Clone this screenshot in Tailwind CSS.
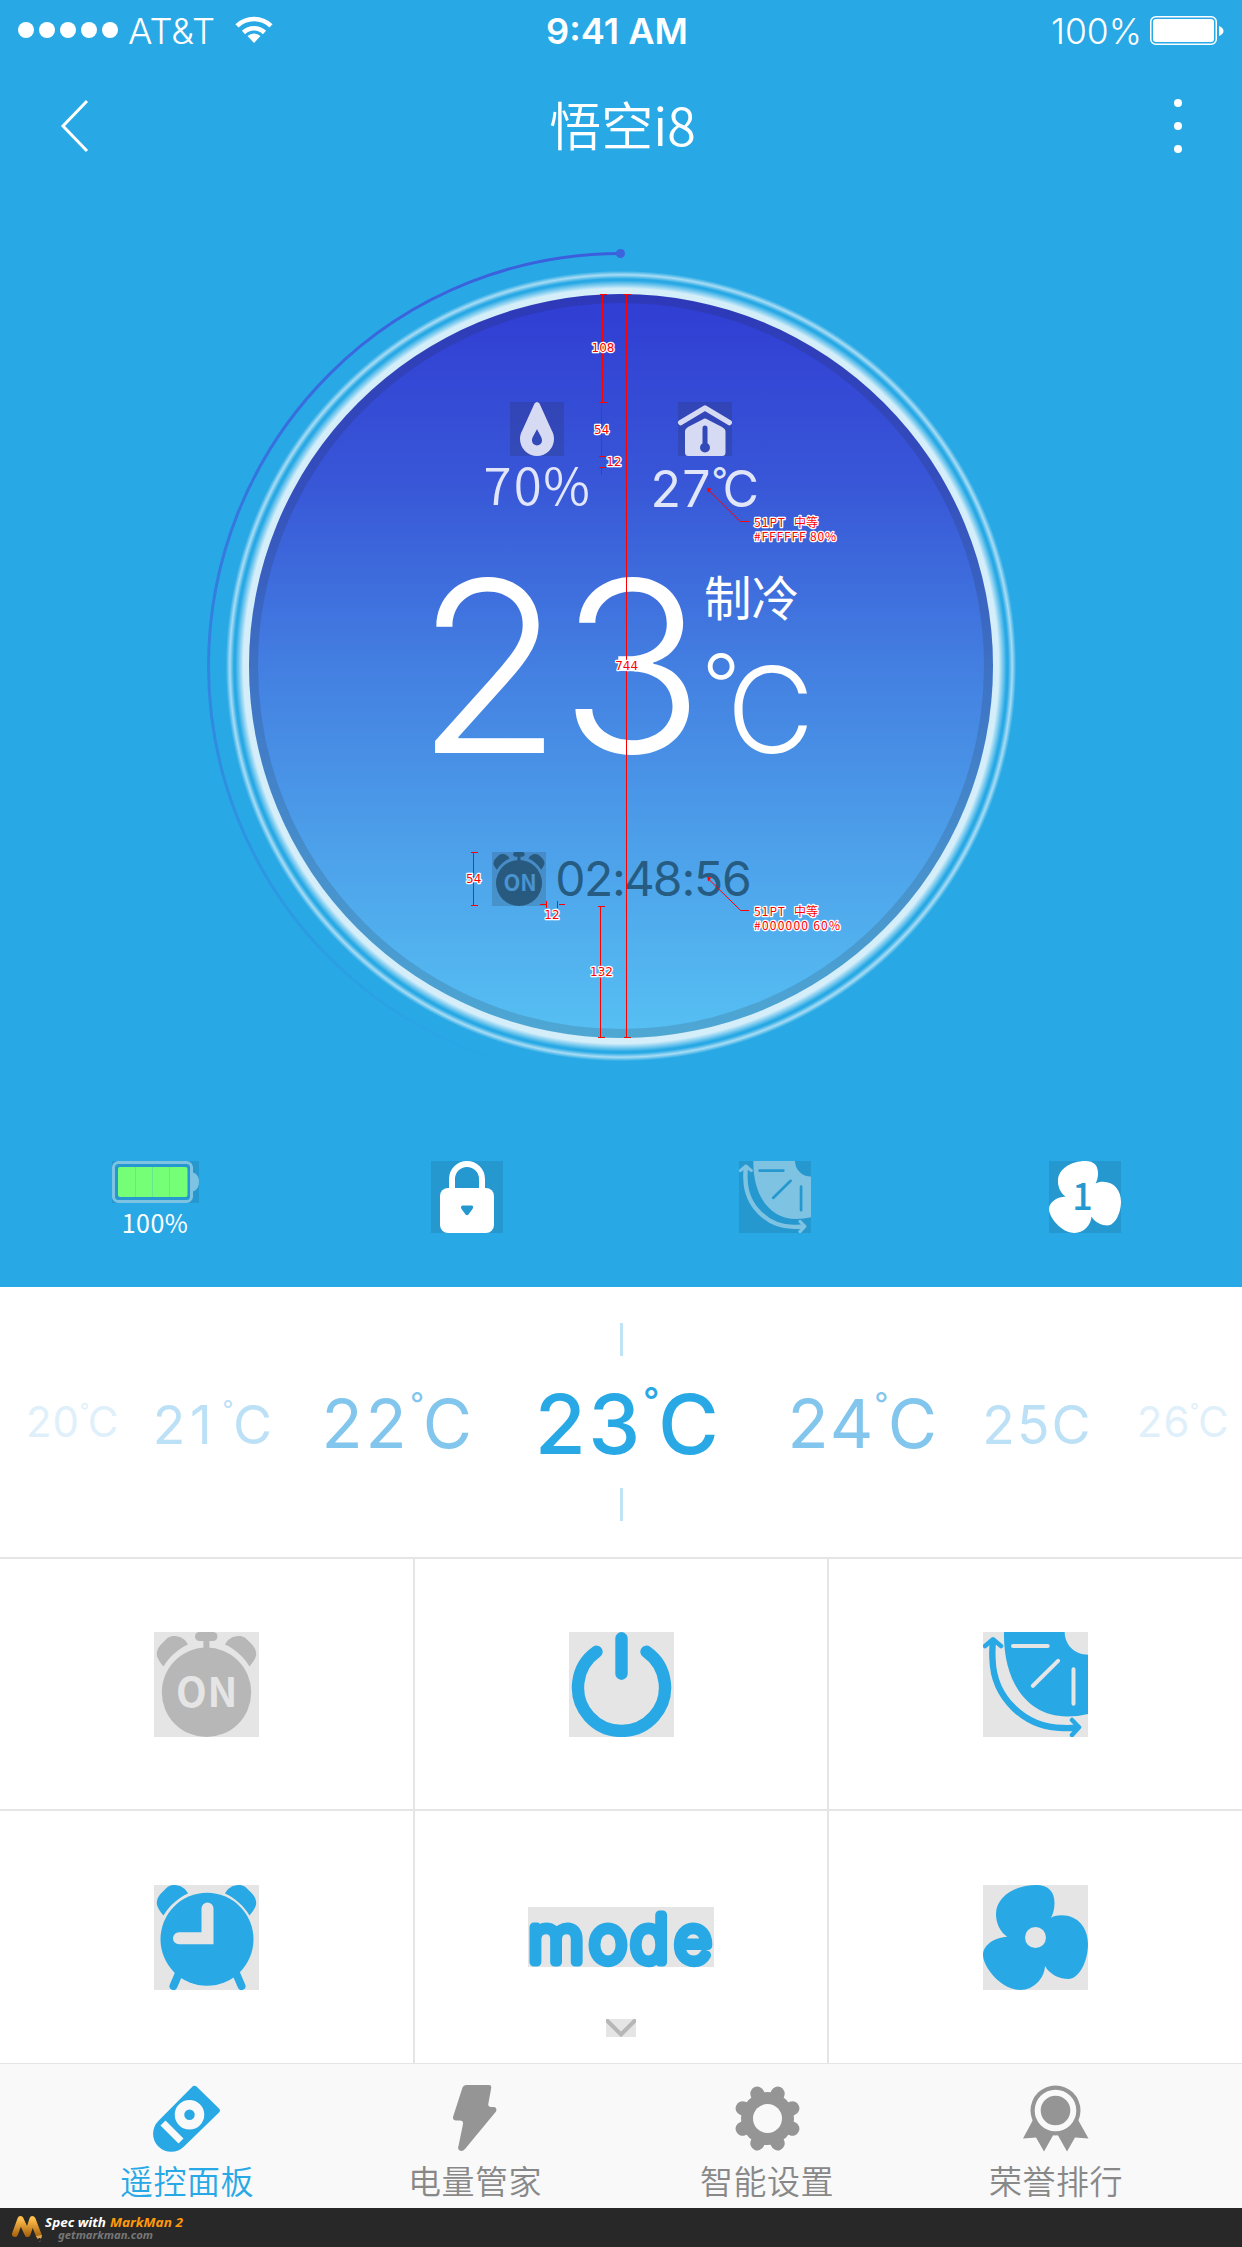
<!DOCTYPE html>
<html lang="zh-CN">
<head>
<meta charset="utf-8">
<title>悟空i8</title>
<script src="https://cdn.jsdelivr.net/npm/@tailwindcss/browser@4"></script>
</head>
<body class="w-[1242px] bg-white font-['Inter','Noto_Sans_CJK_SC',sans-serif]">

<!-- shared icons -->
<svg class="hidden">
  <symbol id="bells" viewBox="0 0 105 105">
    <path d="M9.5 34.5C4.500 29 2.800 24 2.800 22.500C3 16 6 13.500 9.500 10C13.500 5.500 16 4 20.500 4C26.500 4 31.500 7.500 34 12.500C24 17 15 25 9.500 34.500Z"/>
    <path d="M95.500 34.500C100.500 29 102.200 24 102.200 22.500C102 16 99 13.500 95.500 10C91.500 5.500 89 4 84.500 4C78.500 4 73.500 7.500 71 12.500C81 17 90 25 95.500 34.500Z"/>
  </symbol>
  <symbol id="timer" viewBox="0 0 105 105">
    <use href="#bells" width="105" height="105"/>
    <rect x="41" y="0" width="22.500" height="9" rx="4.500"/>
    <rect x="49.400" y="6" width="6" height="12"/>
    <circle cx="52.500" cy="60.300" r="44.700"/>
  </symbol>
  <symbol id="swing" viewBox="0 0 105 105">
    <path fill="currentColor" fill-rule="evenodd" d="M21 0C20 48 43 84.500 84 84.500Q95 84.500 105 82V22.700C92 22.700 81.700 13 81.700 0ZM30 12H64.700A2 2 0 0 1 64.700 16H30A2 2 0 0 1 30 12ZM48.300 52.600L73.900 27.300A2 2 0 0 1 76.700 30.100L51.100 55.400A2 2 0 0 1 48.300 52.600ZM88.500 37.300A2 2 0 0 1 92.500 37.300V71.800A2 2 0 0 1 88.500 71.800Z"/>
    <path fill="none" stroke="currentColor" stroke-width="6.400" d="M10 9Q9 18 9.500 27C10.500 66 42 96 80 96Q87 96.300 95 95.500"/>
    <path fill="none" stroke="currentColor" stroke-width="4.500" stroke-linecap="round" stroke-linejoin="round" d="M2 14L10 7.300L18 14M89 88L96 95.300L89 103"/>
  </symbol>
  <symbol id="fan" viewBox="0 0 105 105">
    <path d="M68 32.700C70 29 71.500 24 71.500 18C71.500 7 66 0 53 0C32 0 13 12 13 29C13 38 17 47 24.300 51.700C10 52.500 0 61 0 70C0 82 18 105 37.500 105C51 105 61.500 93 62 81C67 90 77 94 85.500 94C95 94 105 78 105 59C105 43 95 30.300 78.500 30.300C74.500 30.300 71 31 68 32.700Z"/>
  </symbol>
</svg>

<section class="flex h-[1287px] flex-col bg-[#28a9e5] text-white">
  <!-- status bar -->
  <div class="grid h-[60px] grid-cols-3 items-center text-[35px] leading-none">
    <svg class="h-[60px] w-[300px]" viewBox="0 0 300 60" fill="#fff">
      <circle cx="26" cy="30" r="8"/><circle cx="47" cy="30" r="8"/><circle cx="68" cy="30" r="8"/><circle cx="89" cy="30" r="8"/><circle cx="110" cy="30" r="8"/>
      <text x="128" y="44" font-size="35" font-weight="350" textLength="87" lengthAdjust="spacingAndGlyphs">AT&amp;T</text>
      <path d="M254 43L247.500 36A9.500 9.500 0 0 1 260.500 36Z"/>
      <path fill="none" stroke="#fff" stroke-width="4.600" d="M243.500 32.500A15 15 0 0 1 264.500 32.500M237 25.800A24.500 24.500 0 0 1 271 25.800"/>
    </svg>
    <svg class="h-[60px] w-[414px]" viewBox="0 0 414 60" fill="#fff"><text x="132" y="44" font-size="35" font-weight="600" textLength="142" lengthAdjust="spacingAndGlyphs">9:41 AM</text></svg>
    <svg class="h-[60px] w-[414px]" viewBox="0 0 414 60" fill="#fff">
      <text x="223" y="44" font-size="35" font-weight="350" textLength="91" lengthAdjust="spacingAndGlyphs">100%</text>
      <rect x="322.750" y="16.750" width="65.500" height="27.500" rx="5" fill="none" stroke="#fff" stroke-width="1.500"/>
      <rect x="325" y="19" width="61" height="23" rx="3"/>
      <path d="M391 26Q395.500 28 395.500 31Q395.500 34 391 36Z"/>
    </svg>
  </div>
  <!-- title bar -->
  <header class="grid h-[132px] grid-cols-[1fr_auto_1fr] items-center">
    <svg class="ml-[60px] h-[54px] w-[30px]" viewBox="0 0 30 54" fill="none" stroke="#fff" stroke-width="3"><path d="M27 2L3 27L27 52"/></svg>
    <h1 class="pb-[5px] pl-[3px] font-['Noto_Sans_CJK_SC',sans-serif] text-[52px] leading-none font-[350]">悟空i8</h1>
    <svg class="mr-[58px] h-[54px] w-3 justify-self-end" viewBox="0 0 12 54" fill="#fff"><circle cx="6" cy="4" r="4"/><circle cx="6" cy="27" r="4"/><circle cx="6" cy="50" r="4"/></svg>
  </header>

  <!-- dial -->
  <svg class="h-[928px] w-[1242px]" viewBox="0 192 1242 928">
    <defs>
      <linearGradient id="face" x1="0" y1="0" x2="0" y2="1"><stop offset="0" stop-color="#303dd3"/><stop offset="0.250" stop-color="#3856d7"/><stop offset="0.500" stop-color="#437fe1"/><stop offset="0.750" stop-color="#4da1ea"/><stop offset="1" stop-color="#56c0f3"/></linearGradient>
      <linearGradient id="arc" gradientUnits="userSpaceOnUse" x1="0" y1="253" x2="0" y2="1078"><stop offset="0" stop-color="#3b5fdc"/><stop offset="1" stop-color="#3b5fdc" stop-opacity="0"/></linearGradient>
      <radialGradient id="halo" gradientUnits="userSpaceOnUse" cx="621" cy="666" r="400">
        <stop offset="0.944" stop-color="#fff" stop-opacity="0.800"/><stop offset="0.964" stop-color="#fff" stop-opacity="0"/>
        <stop offset="0.968" stop-color="#fff" stop-opacity="0"/><stop offset="0.978" stop-color="#fff" stop-opacity="0.600"/><stop offset="0.988" stop-color="#fff" stop-opacity="0"/>
      </radialGradient>
    </defs>
    <path d="M621 253.500A412.500 412.500 0 0 0 621 1078.500" fill="none" stroke="url(#arc)" stroke-width="3"/>
    <circle cx="620.500" cy="253.500" r="4.500" fill="#3b64dd"/>
    <circle cx="621" cy="666" r="400" fill="url(#halo)"/>
    <circle cx="621" cy="666" r="372" fill="url(#face)"/>
    <circle cx="621" cy="666" r="367.500" fill="none" stroke="#222" stroke-opacity="0.150" stroke-width="9"/>

    <g fill="#222" fill-opacity="0.170"><rect x="510" y="402" width="54" height="54"/><rect x="678" y="402" width="54" height="54"/><rect x="492" y="852" width="54" height="54"/></g>
    <path transform="translate(510 402)" fill="#d7daf3" fill-rule="evenodd" d="M29.500 1.500L41.500 28C43.300 31 44 34 44 37A17 17 0 0 1 10 37C10 34 10.700 31 12.500 28L24.500 1.500Q27 -1.500 29.500 1.500ZM27 27C25 32 22 34.500 22 38.500A5 5 0 0 0 32 38.500C32 34.500 29 32 27 27Z"/>
    <g transform="translate(678 402)" fill="#d7daf3">
      <path fill="none" stroke="#d7daf3" stroke-width="5.500" stroke-linecap="round" stroke-linejoin="round" d="M2.800 20.500L27 6L51.200 20.500"/>
      <path fill-rule="evenodd" d="M10 25L25 17.200Q27 16 29 17.200L44 25Q47.500 26.800 47.500 29V50.500Q47.500 54 44 54H10.500Q7 54 7 50.500V29Q7 26.800 10 25ZM24.500 26V41.200A5 5 0 1 0 29.500 41.200V26A2.500 2.500 0 0 0 24.500 26Z"/>
    </g>
    <g text-anchor="middle" fill="#fff">
      <text y="505" x="497.500 527.700 566.500" font-family="Noto Sans CJK SC" font-weight="350" font-size="51" fill-opacity="0.850">70%</text>
      <text y="506.500" x="665.700 696.300" font-size="50" font-weight="400" fill-opacity="0.850">27<tspan x="719.700" y="493" font-size="36">°</tspan><tspan x="740.700" y="506.500">C</tspan></text>
      <text y="752.500" x="489 632" font-size="239" font-weight="300">23</text>
      <text y="715" x="721" font-size="84" font-weight="300">°</text>
      <text y="753.300" x="770.500" font-size="120" font-weight="300">C</text>
      <text y="616" x="751.500" font-family="Noto Sans CJK SC" font-size="47.500">制冷</text>
      <text y="896" x="570.300 598.700 619 639.300 667.700 688.300 708.700 737" font-size="48" font-weight="400" fill="#275c82">02:48:56</text>
    </g>
    <g fill="#285a7f"><use href="#timer" x="492" y="852" width="54" height="54"/></g>
    <text x="512 528.500" y="891" text-anchor="middle" font-family="Noto Sans CJK SC" font-weight="700" font-size="22" fill="#4893d0">ON</text>

    <!-- spec marks -->
    <g fill="none" stroke="#f00" shape-rendering="crispEdges">
      <path d="M599.500 294.500H606.500M602.500 294V402M598.500 402.500H606.500M601.500 402V456M598.500 456.500H605.500M598.500 467.500H605.500M601.500 467V475M623.500 294.500H630.500M626.500 294V1037M623.500 1037.500H630.500M597.500 906.500H604.500M600.500 906V1037M597.500 1037.500H604.500M470.500 852.500H477.500M473.500 852V905M470.500 905.500H477.500M540 904.500H546M546.500 901V908M557.500 901V908M559 904.500H565"/>
    </g>
    <g fill="none" stroke="#f00"><path d="M709 490.500L740.300 521.500H749M709 879.500L740.700 910.500H749"/><path fill="#f00" stroke="none" d="M707 488L711.500 488.500L708 492.500ZM707.300 877L711.500 877.500L708 881.500Z"/></g>
    <g fill="#f00" stroke="#fff" stroke-width="2.500" stroke-linejoin="round" paint-order="stroke" font-size="12" font-family="DejaVu Sans">
      <g text-anchor="middle"><text x="603" y="352">108</text><text x="601.700" y="433.500">54</text><text x="614" y="466">12</text><text x="626.700" y="670">744</text><text x="473.700" y="883">54</text><text x="552" y="919">12</text><text x="601.500" y="976">132</text></g>
      <g font-family="Noto Sans CJK SC"><text x="754" y="527" textLength="31">51PT</text><text x="794" y="527">中等</text><text x="754" y="541" textLength="82">#FFFFFF 80%</text><text x="754" y="916" textLength="31">51PT</text><text x="794" y="916">中等</text><text x="754" y="930" textLength="86">#000000 60%</text></g>
    </g>
  </svg>

  <!-- state icons -->
  <div class="flex pt-[41px] pl-[112px]">
    <div class="w-[87px]">
      <svg class="block h-[42px] w-[87px]" viewBox="0 0 87 42"><rect width="87" height="42" fill="#2598cf"/><rect x="1.500" y="1.500" width="78" height="39" rx="5" fill="none" stroke="#7fc3e3" stroke-width="3"/><path d="M81 11.500Q87 13.500 87 21Q87 28.500 81 30.500Z" fill="#7fc3e3"/><rect x="6" y="6" width="69.500" height="30" rx="2" fill="#75ff76"/><path d="M23.500 6V36M40.500 6V36M57.500 6V36" stroke="#62ea8a"/></svg>
      <div class="pt-[7px] pr-[1px] text-center font-['Noto_Sans_CJK_SC',sans-serif] text-[25px] leading-6 tracking-[0.5px]">100%</div>
    </div>
    <svg class="ml-[232px] size-[72px]" viewBox="0 0 72 72"><rect width="72" height="72" fill="#2598cf"/><path d="M21 30V18A15 15 0 0 1 51 18V30" fill="none" stroke="#fff" stroke-width="6"/><rect x="9" y="27" width="54" height="45" rx="8" fill="#fff"/><path d="M31.500 44.500H41Q43 45.500 41.500 48L37.500 53.500Q36 55 34.500 53.500L30.500 48Q29 45.500 31.500 44.500Z" fill="#2598cf"/></svg>
    <svg class="ml-[236px] size-[72px] text-[#7fc3e3]" viewBox="0 0 72 72"><rect width="72" height="72" fill="#2598cf"/><use href="#swing" width="72" height="72"/></svg>
    <svg class="ml-[238px] size-[72px]" viewBox="0 0 72 72"><rect width="72" height="72" fill="#2598cf"/><use href="#fan" width="72" height="72" fill="#fff"/><text x="33.500" y="49" text-anchor="middle" font-family="Noto Sans CJK SC" font-weight="500" font-size="36" fill="#2598cf">1</text></svg>
  </div>
</section>

<!-- temperature picker -->
<section class="flex h-[270px] flex-col items-center justify-center">
  <div class="h-[33px] w-[3px] bg-[#bfe4f6]"></div>
  <svg class="h-[132px] w-[1242px]" viewBox="0 1356 1242 132" text-anchor="middle">
    <g font-size="42" font-weight="400" fill="#dff0fb"><text y="1437" x="38.800 65.700">20<tspan font-size="20" x="84.500" y="1417.500">°</tspan><tspan x="103.200" y="1437">C</tspan></text><text y="1437" x="1149.500 1176.500">26<tspan font-size="20" x="1194.500" y="1417.500">°</tspan><tspan x="1213.300" y="1437">C</tspan></text></g>
    <g font-size="53.500" font-weight="400" fill="#bce0f6"><text y="1444" x="169 201">21<tspan font-size="24" x="228" y="1418">°</tspan><tspan x="252.500" y="1444">C</tspan></text><text y="1444" x="998.500 1033.300 1071">25C</text></g>
    <g font-size="67.500" font-weight="400" fill="#82c6ed"><text y="1448" x="342 386">22<tspan font-size="31" x="417" y="1415">°</tspan><tspan x="447.500" y="1448">C</tspan></text><text y="1448" x="808 851.500">24<tspan font-size="31" x="881.300" y="1415">°</tspan><tspan x="912.300" y="1448">C</tspan></text></g>
    <text font-size="83" font-weight="500" fill="#28a9e5" y="1454" x="560.300 614.300">23<tspan font-size="36" x="651.300" y="1413">°</tspan><tspan x="688.500" y="1454">C</tspan></text>
  </svg>
  <div class="h-[33px] w-[3px] bg-[#bfe4f6]"></div>
</section>

<!-- control pad -->
<section class="grid h-[507px] grid-cols-[413px_412px_413px] grid-rows-[250px_252px] gap-[2px] border-t-2 border-b border-[#e5e5e5] bg-[#e5e5e5]">
  <div class="flex items-center justify-center bg-white"><svg class="size-[105px]" viewBox="0 0 105 105"><rect width="105" height="105" fill="#e5e5e5"/><use href="#timer" width="105" height="105" fill="#b7b7b7"/><text x="37.500 68.500" y="75" text-anchor="middle" font-family="Noto Sans CJK SC" font-weight="700" font-size="40" fill="#e5e5e5">ON</text></svg></div>
  <div class="flex items-center justify-center bg-white"><svg class="size-[105px]" viewBox="0 0 105 105"><rect width="105" height="105" fill="#e5e5e5"/><path d="M27.500 19.800A43.500 43.500 0 1 0 77.500 19.800M52.500 6.300V41.700" fill="none" stroke="#28a9e5" stroke-width="12.400" stroke-linecap="round"/></svg></div>
  <div class="flex items-center justify-center bg-white"><svg class="size-[105px] text-[#28a9e5]" viewBox="0 0 105 105"><rect width="105" height="105" fill="#e5e5e5"/><use href="#swing" width="105" height="105"/></svg></div>
  <div class="flex items-center justify-center bg-white"><svg class="size-[105px]" viewBox="0 0 105 105"><rect width="105" height="105" fill="#e5e5e5"/><use href="#bells" y="-4" width="105" height="105" fill="#28a9e5"/><path d="M25.500 87L19.500 101M81.500 87L87.500 101" stroke="#28a9e5" stroke-width="8" stroke-linecap="round"/><circle cx="53" cy="54.300" r="46.500" fill="#28a9e5"/><path d="M53.500 23.500V53.300H25" fill="none" stroke="#e5e5e5" stroke-width="12" stroke-linecap="round"/></svg></div>
  <div class="flex flex-col items-center bg-white pt-[96px]">
    <svg class="h-[60px] w-[186px] overflow-visible" viewBox="0 0 186 60"><rect width="186" height="60" fill="#e5e5e5"/><text x="28 80 121.500 165" y="55" text-anchor="middle" font-size="64" font-weight="200" fill="#28a9e5" stroke="#28a9e5" stroke-width="9" stroke-linejoin="round" stroke-linecap="round">mode</text></svg>
    <svg class="mt-[52px] h-[18px] w-[30px]" viewBox="0 0 30 18"><rect width="30" height="18" fill="#e5e5e5"/><path d="M1.500 2L15 15.500L28.500 2" fill="none" stroke="#b7b7b7" stroke-width="4" stroke-linecap="round"/></svg>
  </div>
  <div class="flex items-center justify-center bg-white"><svg class="size-[105px]" viewBox="0 0 105 105"><rect width="105" height="105" fill="#e5e5e5"/><use href="#fan" width="105" height="105" fill="#28a9e5"/><circle cx="52.500" cy="52.500" r="10.500" fill="#e5e5e5"/></svg></div>
</section>

<!-- tab bar -->
<nav class="grid h-[144px] grid-cols-[290px_286px_298px_280px] bg-[#f9f9f9] px-[42px] pt-[21px] text-center font-['Noto_Sans_CJK_SC',sans-serif] text-[33px] leading-[44px] font-[350] tracking-[0.5px] text-[#888]">
  <div class="flex flex-col items-center text-[#28a9e5]">
    <svg class="h-[67px] w-[68px]" viewBox="0 0 68 67"><path fill="#28a9e5" d="M39.500 1.500Q41.500 0 43.500 1.500L66 23.500Q68 25.500 66 27.500L31 61.500A18 18 0 0 1 5.300 36Z"/><circle cx="36.500" cy="29.700" r="10" fill="#28a9e5" stroke="#f9f9f9" stroke-width="9.500"/><path d="M10 38L28 56" stroke="#f9f9f9" stroke-width="7"/></svg>
    <span class="pt-[6px]">遥控面板</span>
  </div>
  <div class="flex flex-col items-center">
    <svg class="h-[67px] w-[44px]" viewBox="0 0 44 67"><path fill="#959595" d="M13 0H36Q38.500 0 38.300 2.500L35.300 19Q35 22 38 22H41Q44.500 22.500 43 26.500L12 64Q9 67.500 6 65Q4.500 63.500 5.500 61L10 39Q10.500 35.500 7 35.500H2.500Q-.5 35 0 32L9.500 2.500Q10.500 0 13 0Z"/></svg>
    <span class="pt-[6px]">电量管家</span>
  </div>
  <div class="flex flex-col items-center">
    <svg class="size-[67px]" viewBox="-33.500 -33.500 67 67"><g stroke="#959595" stroke-width="14" stroke-linecap="round"><path d="M-10.200 -24.900L10.200 24.900M10.200 -24.900L-10.200 24.900M-24.900 -10.200L24.900 10.200M-24.900 10.200L24.900 -10.200"/></g><circle r="26.500" fill="#959595"/><circle r="14.500" fill="#f9f9f9"/></svg>
    <span class="pt-[6px]">智能设置</span>
  </div>
  <div class="flex flex-col items-center">
    <svg class="h-[67px] w-[66px]" viewBox="0 0 66 67"><path fill="#959595" d="M11 33L0 53.500L13 52.500L21 66.500L32.500 46L44 66.500L52 52.500L65.500 53.500L54 33Z"/><circle cx="32.500" cy="25.500" r="25" fill="#959595"/><circle cx="32.500" cy="25.500" r="17.800" fill="#959595" stroke="#f9f9f9" stroke-width="6"/></svg>
    <span class="pt-[6px]">荣誉排行</span>
  </div>
</nav>

<footer class="h-[39px] bg-[#282828]">
  <svg class="h-[39px] w-[240px]" viewBox="0 0 240 39" font-family="Noto Sans" font-weight="700" font-style="italic">
    <defs><linearGradient id="gold" x1="0" y1="0" x2="0" y2="1"><stop offset="0" stop-color="#ffbf4d"/><stop offset="1" stop-color="#a9620a"/></linearGradient></defs>
    <path d="M15 26L20.500 11L27.500 26L32.500 11L39 28" fill="none" stroke="url(#gold)" stroke-width="6" stroke-linecap="round" stroke-linejoin="round"/>
    <path d="M36 28L42 27L40 34Z" fill="#d9a65a"/><circle cx="39.500" cy="31.500" r="1.500" fill="#222"/>
    <text x="45" y="18.500" font-size="13" fill="#fff" textLength="61" lengthAdjust="spacingAndGlyphs">Spec with</text>
    <text x="110" y="18.500" font-size="13" fill="#ff9a0c" textLength="73" lengthAdjust="spacingAndGlyphs">MarkMan 2</text>
    <text x="58" y="31" font-size="11" fill="#777" textLength="95" lengthAdjust="spacingAndGlyphs">getmarkman.com</text>
  </svg>
</footer>
</body>
</html>
